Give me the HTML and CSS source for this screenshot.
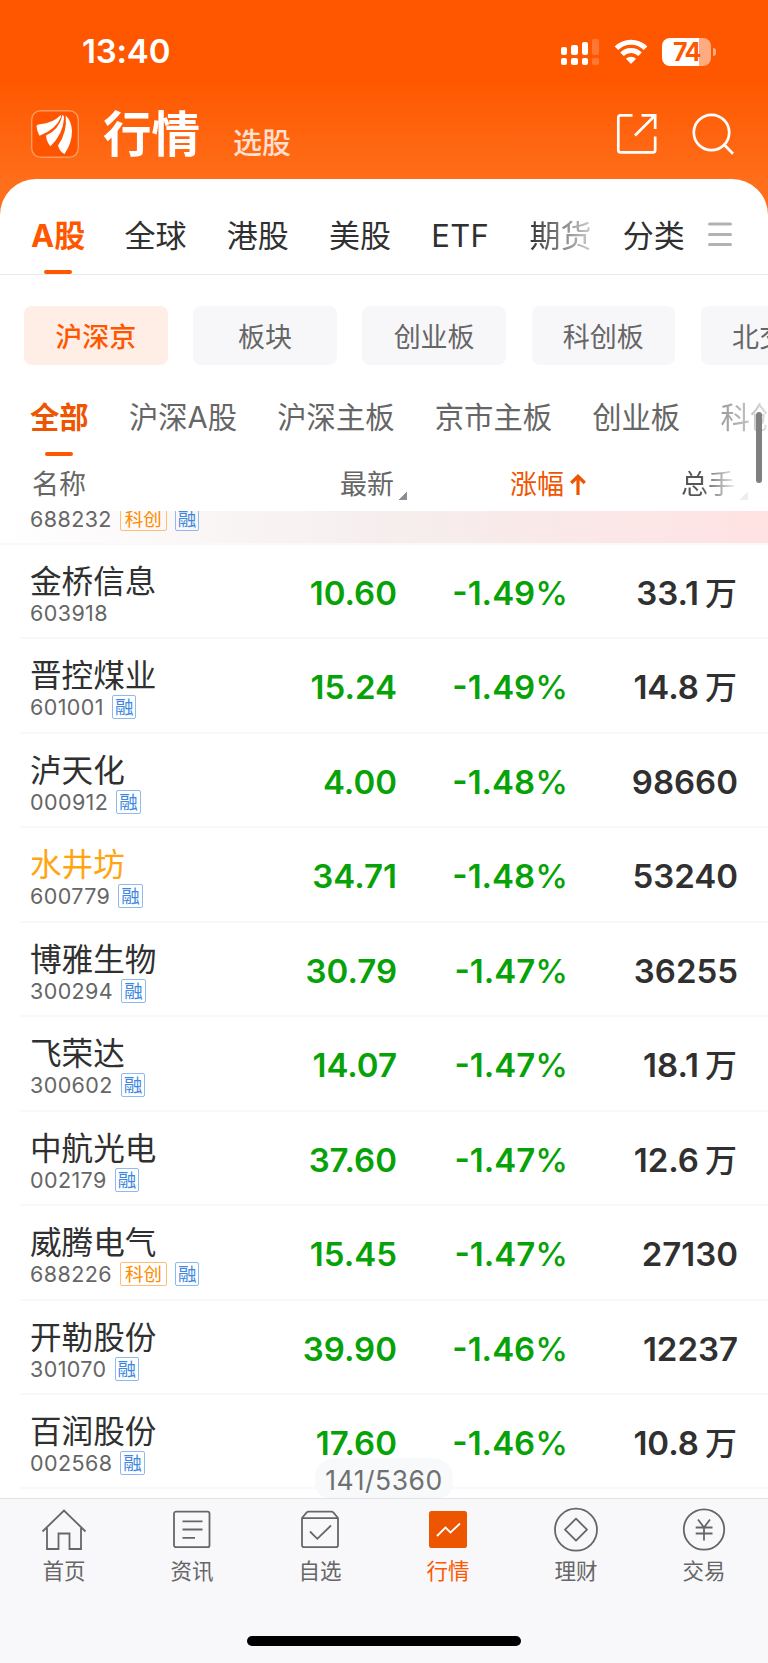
FILE: index.html
```html
<!DOCTYPE html>
<html lang="zh-CN">

<head>
  <meta charset="UTF-8">
  <meta name="viewport" content="width=device-width, initial-scale=1.0">
  <title>行情</title>
  <link rel="stylesheet" href="styles.css">
</head>

<body>
  <header>
    <div class="status-bar">
      <span class="time">13:40</span>
      <svg class="signal" width="40" height="28" viewBox="0 0 40 28" fill="#fff">
        <rect x="1" y="9" width="6" height="8" rx="2" />
        <rect x="11" y="7" width="7" height="10" rx="2" />
        <rect x="22" y="4" width="6" height="13" rx="2" />
        <rect x="32" y="1" width="7" height="16" rx="2" opacity=".2" />
        <rect x="1" y="20" width="6" height="7" rx="2" />
        <rect x="11" y="20" width="7" height="7" rx="2" />
        <rect x="22" y="20" width="6" height="7" rx="2" />
        <rect x="32" y="20" width="7" height="7" rx="2" opacity=".2" />
      </svg>
      <svg class="wifi" width="34" height="26" viewBox="0 0 34 26" fill="none" stroke="#fff" stroke-width="5">
        <path d="M2.5 9.2a20.5 20.5 0 0 1 29 0" />
        <path d="M8 15.2a12.7 12.7 0 0 1 18 0" />
        <path d="M17 25l-5-5.2a7.2 7.2 0 0 1 10 0z" fill="#fff" stroke="none" />
      </svg>
      <div class="battery"><span>74</span></div>
    </div>
    <div class="title-bar">
      <svg class="logo" width="48" height="48" viewBox="0 0 48 48">
        <rect x=".7" y=".7" width="46.6" height="46.6" rx="9" fill="#ff5500" stroke="#ff9a60" stroke-width="1.4" />
        <path d="M5.5 16Q6 14.5 9 14.300Q22 13 29.500 5.200Q30.500 5 30 7Q25 19.500 8.500 25.700Q6 22 5.500 16z" fill="#fff" />
        <path d="M31.500 5Q33 5 33 8.500Q32 24 19.500 36.300Q15.500 32 15 25.500Q28 20 31.500 5z" fill="#fff" />
        <path d="M34.700 5.500Q40.500 11 41 21Q41 33 33.500 44Q28.500 41.500 27 35.500Q36.500 22 34.700 5.500z" fill="#fff" />
      </svg>
      <h1>行情</h1>
      <span class="sub-title">选股</span>
      <svg class="share" width="42" height="42" viewBox="0 0 42 42" fill="none" stroke="#fff" stroke-width="2.700">
        <path d="M16.500 2.300H4.500Q2.300 2.300 2.300 4.500V37Q2.300 39.300 4.500 39.300H37Q39.200 39.300 39.200 37V23.500" />
        <path d="M25.500 2.300H39.200V16M38.500 3L19 22.500" />
      </svg>
      <svg class="search" width="42" height="42" viewBox="0 0 42 42" fill="none" stroke="#fff" stroke-width="2.700">
        <circle cx="19.500" cy="19.500" r="17.700" />
        <path d="M31.500 31l9.500 9.700" />
      </svg>
    </div>
  </header>

  <main>
    <nav class="market-tabs">
      <a class="active">A股</a>
      <a>全球</a>
      <a>港股</a>
      <a>美股</a>
      <a class="etf">ETF</a>
      <a class="fade">期货</a>
      <a class="more">分类</a>
      <svg width="24" height="25" viewBox="0 0 24 25" stroke="#b2b2b2" stroke-width="3" stroke-linecap="round">
        <path d="M1.500 2h21M1.500 12.500h21M1.500 22.500h21" />
      </svg>
    </nav>

    <div class="chips">
      <span class="chip active">沪深京</span>
      <span class="chip">板块</span>
      <span class="chip">创业板</span>
      <span class="chip">科创板</span>
      <span class="chip">北交所</span>
    </div>

    <div class="filter-area">
      <nav class="sub-tabs">
        <a class="active">全部</a>
        <a>沪深A股</a>
        <a>沪深主板</a>
        <a>京市主板</a>
        <a>创业板</a>
        <a class="fade">科创</a>
      </nav>
      <div class="table-head">
        <span class="col-name">名称</span>
        <span class="col-price">最新<i class="corner"></i></span>
        <span class="col-change">涨幅<svg width="16" height="21" viewBox="0 0 16 21" fill="none" stroke="#ee5500" stroke-width="3.200">
            <path d="M8 21V2.500M1.200 9L8 2.300L14.800 9" />
          </svg></span>
        <span class="col-volume">总手<i class="corner"></i></span>
      </div>
      <div class="scrollbar"></div>
    </div>

    <section class="stock-list">
      <div class="row partial">
        <div class="stock"><div class="code">688232<span class="tag star">科创</span><span class="tag">融</span></div></div>
      </div>
      <div class="row">
        <div class="stock"><div class="name">金桥信息</div><div class="code">603918</div></div>
        <div class="num">10.60</div><div class="num change">-1.49<b>%</b></div><div class="num volume">33.1<em>万</em></div>
      </div>
      <div class="row">
        <div class="stock"><div class="name">晋控煤业</div><div class="code">601001<span class="tag">融</span></div></div>
        <div class="num">15.24</div><div class="num change">-1.49<b>%</b></div><div class="num volume">14.8<em>万</em></div>
      </div>
      <div class="row">
        <div class="stock"><div class="name">泸天化</div><div class="code">000912<span class="tag">融</span></div></div>
        <div class="num">4.00</div><div class="num change">-1.48<b>%</b></div><div class="num volume">98660</div>
      </div>
      <div class="row">
        <div class="stock"><div class="name held">水井坊</div><div class="code">600779<span class="tag">融</span></div></div>
        <div class="num">34.71</div><div class="num change">-1.48<b>%</b></div><div class="num volume">53240</div>
      </div>
      <div class="row">
        <div class="stock"><div class="name">博雅生物</div><div class="code">300294<span class="tag">融</span></div></div>
        <div class="num">30.79</div><div class="num change">-1.47<b>%</b></div><div class="num volume">36255</div>
      </div>
      <div class="row">
        <div class="stock"><div class="name">飞荣达</div><div class="code">300602<span class="tag">融</span></div></div>
        <div class="num">14.07</div><div class="num change">-1.47<b>%</b></div><div class="num volume">18.1<em>万</em></div>
      </div>
      <div class="row">
        <div class="stock"><div class="name">中航光电</div><div class="code">002179<span class="tag">融</span></div></div>
        <div class="num">37.60</div><div class="num change">-1.47<b>%</b></div><div class="num volume">12.6<em>万</em></div>
      </div>
      <div class="row">
        <div class="stock"><div class="name">威腾电气</div><div class="code">688226<span class="tag star">科创</span><span class="tag">融</span></div></div>
        <div class="num">15.45</div><div class="num change">-1.47<b>%</b></div><div class="num volume">27130</div>
      </div>
      <div class="row">
        <div class="stock"><div class="name">开勒股份</div><div class="code">301070<span class="tag">融</span></div></div>
        <div class="num">39.90</div><div class="num change">-1.46<b>%</b></div><div class="num volume">12237</div>
      </div>
      <div class="row">
        <div class="stock"><div class="name">百润股份</div><div class="code">002568<span class="tag">融</span></div></div>
        <div class="num">17.60</div><div class="num change">-1.46<b>%</b></div><div class="num volume">10.8<em>万</em></div>
      </div>
      <div class="position">141/5360</div>
    </section>
  </main>

  <footer>
    <nav class="tab-bar">
      <a>
        <svg width="46" height="46" viewBox="0 0 46 46">
          <path d="M1.500 24.500L23 3.500L44.500 24.500M6 21V42H17.500V26.500H28.500V42H40V21" />
        </svg>
        首页
      </a>
      <a>
        <svg width="46" height="46" viewBox="0 0 46 46">
          <rect x="5" y="4.700" width="35.500" height="35.500" rx="2" />
          <path d="M13.500 14.300h20M13.500 22.500h20M13.500 30.800h12.500" />
        </svg>
        资讯
      </a>
      <a>
        <svg width="46" height="46" viewBox="0 0 46 46">
          <path d="M5 11L9.500 5.700Q10.300 4.700 11.500 4.700H34.500Q35.700 4.700 36.500 5.700L41 11V38Q41 40.200 39 40.200H7Q5 40.200 5 38zM5 11.200H41M13 24.500L20.300 31.800L34 18.500" />
        </svg>
        自选
      </a>
      <a class="active">
        <svg width="46" height="46" viewBox="0 0 46 46">
          <rect x="4" y="4" width="38" height="37" rx="2.500" class="filled" />
          <path d="M12 29L20.500 20.500L25.500 25.500L35 16.500" class="trend" />
        </svg>
        行情
      </a>
      <a>
        <svg width="46" height="46" viewBox="0 0 46 46">
          <circle cx="23" cy="22.700" r="21" />
          <path d="M23 11.700L34 22.700L23 33.700L12 22.700z" stroke-linejoin="round" />
        </svg>
        理财
      </a>
      <a>
        <svg width="46" height="46" viewBox="0 0 46 46">
          <circle cx="23" cy="22.500" r="20.200" />
          <path d="M17 12.500L23 20.500L29 12.500M23 20.500V33.500M14.700 20.500H31.500M14.700 26.500H31.500" />
        </svg>
        交易
      </a>
    </nav>
    <div class="home-indicator"></div>
  </footer>
</body>

</html>
```
FILE: styles.css
```css
* {
  box-sizing: border-box;
}

body {
  width: 768px;
  height: 1663px;
  margin: 0;
  overflow: hidden;
  font-family: Inter, "Noto Sans CJK SC", sans-serif;
  color: #303030;
  background: linear-gradient(#ff5700, #ff5700 78px, #ff6e1a 180px);
}

svg {
  display: block;
  flex: none;
}

header {
  height: 179px;
  color: #fff;
}

.status-bar {
  height: 100px;
  padding: 3px 57px 0 82px;
  display: flex;
  align-items: center;
}

.time {
  flex: 1;
  margin-top: -2px;
  font-size: 33px;
  font-weight: 600;
  letter-spacing: -0.2px;
}

.wifi {
  margin: 0 14px;
}

.battery {
  position: relative;
  width: 49px;
  height: 28px;
  border-radius: 8px;
  background: linear-gradient(90deg, #fff 75%, #ffab80 75%);
  color: #ff5700;
  font-size: 25px;
  font-weight: 700;
  line-height: 28px;
  letter-spacing: -1.5px;
  text-align: center;
}

/* battery tip */
.battery::after {
  content: "";
  position: absolute;
  left: 51px;
  top: 10px;
  width: 3px;
  height: 8px;
  border-radius: 0 4px 4px 0;
  background: #ffab80;
}

.title-bar {
  height: 68px;
  padding: 0 34px 0 31px;
  display: flex;
  align-items: center;
}

h1 {
  margin: 2px 0 0 24px;
  font-size: 48.500px;
  line-height: 60px;
  font-weight: 700;
}

.sub-title {
  flex: 1;
  margin: 19px 0 0 33px;
  font-size: 29px;
  line-height: 36px;
  font-weight: 500;
  color: #ffe0d0;
}

.search {
  margin-left: 34px;
}

main {
  height: 1319px;
  background: #fff;
  border-radius: 36px 36px 0 0;
  overflow: hidden;
}

.market-tabs {
  height: 96px;
  padding-left: 31px;
  display: flex;
  align-items: center;
  gap: 40.300px;
  border-bottom: 1px solid #ebebed;
  font-size: 31px;
}

.market-tabs a {
  position: relative;
  height: 95px;
  line-height: 113px;
  white-space: nowrap;
}

.market-tabs .active,
.sub-tabs .active {
  color: #ff5700;
  font-weight: 700;
}

.market-tabs .active {
  margin-right: -1px;
}

.market-tabs .active::after,
.sub-tabs .active::after {
  content: "";
  position: absolute;
  left: 50%;
  bottom: 0;
  width: 28px;
  height: 4px;
  margin-left: -14px;
  border-radius: 2px;
  background: #ff5700;
}

.market-tabs .etf {
  letter-spacing: 0.3px;
}

.fade {
  color: transparent;
  background: linear-gradient(90deg, #333, #d0d0d0);
  background-clip: text;
  -webkit-background-clip: text;
}

.market-tabs .more {
  margin-left: -9px;
}

.market-tabs svg {
  margin: 15px 0 0 -17px;
}

.chips {
  height: 90px;
  padding: 31px 0 0 24px;
  display: flex;
  gap: 25.700px;
}

.chip {
  flex: none;
  width: 143.500px;
  height: 59px;
  border-radius: 8px;
  background: #f7f7fa;
  color: #666;
  font-size: 27px;
  line-height: 63px;
  text-align: center;
}

.chip.active {
  background: #ffeee6;
  color: #ff5700;
  font-weight: 500;
}

.filter-area {
  position: relative;
  height: 146px;
}

.sub-tabs {
  height: 91px;
  padding-left: 30px;
  display: flex;
  gap: 40.300px;
  font-size: 29.300px;
  line-height: 106px;
  color: #666;
  white-space: nowrap;
}

.sub-tabs a {
  position: relative;
}

.sub-tabs .active {
  color: #ee5500;
}

.sub-tabs .fade {
  background-image: linear-gradient(90deg, #999, #eee);
}

.table-head {
  height: 55px;
  padding-left: 32px;
  display: grid;
  grid-template-columns: 308px 170px 171px 1fr;
  font-size: 27px;
  line-height: 58px;
  color: #666;
}

.table-head span {
  display: flex;
}

.corner {
  width: 8px;
  height: 8px;
  margin: 36px 0 0 5px;
  background: linear-gradient(135deg, transparent 50%, #8e8e94 50%);
}

.col-change {
  color: #ee5500;
}

.col-change svg {
  margin: 18px 0 0 6px;
}

.col-volume {
  color: transparent;
  background: linear-gradient(90deg, #555 20px, #eee 54px);
  background-clip: text;
  -webkit-background-clip: text;
}

.col-volume .corner {
  opacity: 0.15;
}

.scrollbar {
  position: absolute;
  top: 47px;
  right: 6px;
  width: 6px;
  height: 71px;
  border-radius: 3px;
  background: #7f7f7f;
}

.stock-list {
  position: relative;
  height: 987px;
}

.row {
  height: 94.450px;
  margin-left: 20px;
  padding: 0 30px 0 10px;
  display: grid;
  grid-template-columns: 217px 150px 170px 171px;
  border-bottom: 2px solid #f9f9fa;
}

.row.partial {
  height: 34px;
  margin-left: 0;
  padding-left: 30px;
  overflow: hidden;
  background: linear-gradient(90deg, #fff, #f6eeee 50%, #ffe2e2);
  background-clip: padding-box;
}

.partial .code {
  margin-top: -6px;
}

.name {
  height: 34px;
  margin-top: 19px;
  font-size: 31.600px;
  line-height: 36px;
  white-space: nowrap;
}

.name.held {
  color: #ffa511;
}

.code {
  display: flex;
  align-items: center;
  height: 28px;
  margin-top: 1px;
  font-size: 21.500px;
  line-height: 28px;
  letter-spacing: 0.4px;
  color: #666;
}

.tag {
  height: 24px;
  margin-left: 8px;
  padding: 0 2px;
  border: 1px solid #8dbaf0;
  border-radius: 2px;
  color: #3c87e0;
  font-size: 18.500px;
  line-height: 22px;
  letter-spacing: 0;
}

.tag.star {
  padding: 0 4px;
  border-color: #ffbe75;
  color: #ff8c00;
}

.num {
  font-size: 33px;
  font-weight: 600;
  line-height: 96px;
  text-align: right;
  white-space: nowrap;
  color: #07a207;
}

.num b {
  font-weight: 500;
}

.num.change {
  margin-right: -1px;
}

.volume {
  color: #303030;
}

.volume em {
  margin: 0 1px 0 6px;
  font-size: 32px;
  font-style: normal;
  font-weight: 500;
}

/* current position in the list */
.position {
  position: absolute;
  left: 315px;
  bottom: 0;
  width: 138px;
  height: 40px;
  border-radius: 20px 20px 14px 14px;
  background: #f7f9fb;
  color: #707070;
  font-size: 26.500px;
  line-height: 44px;
  letter-spacing: 0.5px;
  text-align: center;
}

footer {
  height: 165px;
  border-top: 1px solid #e3e3e6;
  background: #f8f8fb;
}

.tab-bar {
  height: 137px;
  display: grid;
  grid-template-columns: repeat(6, 128px);
}

.tab-bar a {
  display: flex;
  flex-direction: column;
  align-items: center;
  padding-top: 8px;
  font-size: 21.500px;
  line-height: 36px;
  color: #666;
}

.tab-bar svg {
  fill: none;
  stroke: #666;
  stroke-width: 1.800;
}

.tab-bar .active {
  color: #ff5700;
}

.tab-bar .filled {
  fill: #ee5500;
  stroke: none;
}

.tab-bar .trend {
  stroke: #fff;
}

.home-indicator {
  width: 274px;
  height: 10px;
  margin: 0 auto;
  border-radius: 5px;
  background: #000;
}
```
